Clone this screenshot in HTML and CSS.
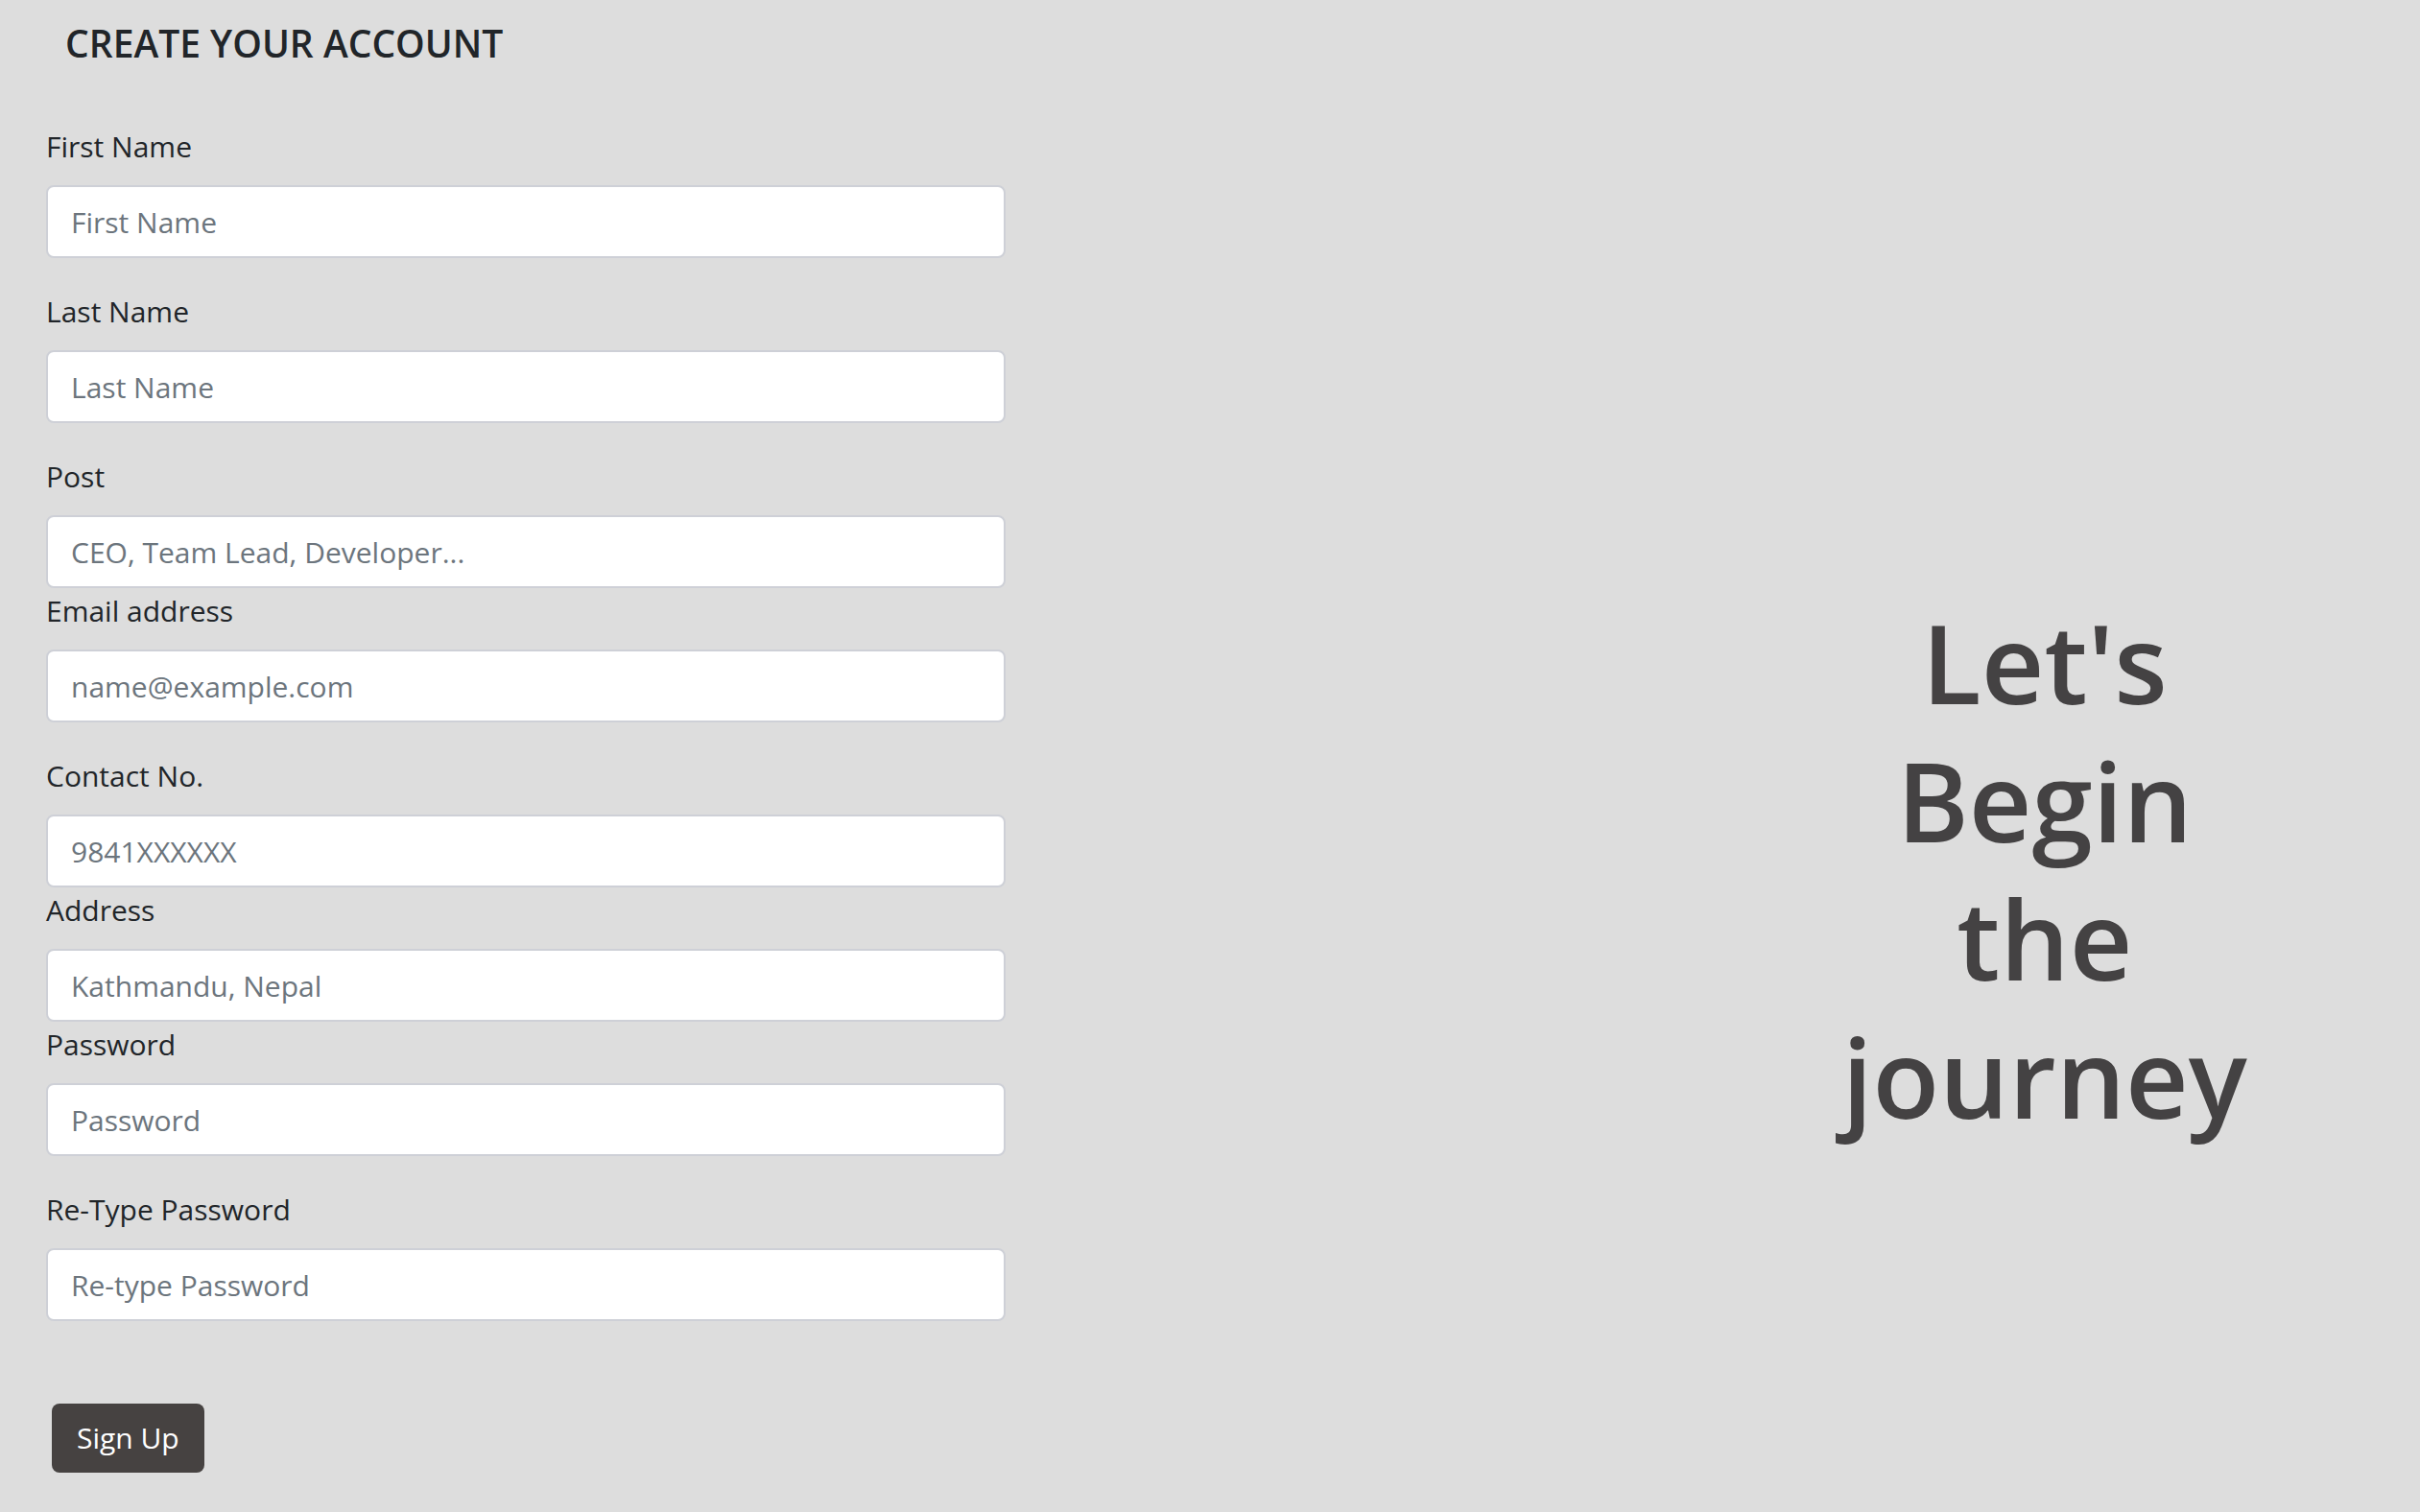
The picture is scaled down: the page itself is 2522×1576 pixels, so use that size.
FILE: index.html
```html
<!DOCTYPE html>
<html lang="en">
<head>
  <meta charset="utf-8">
  <meta name="viewport" content="width=device-width, initial-scale=1">
  <title>Create your account</title>
  <link rel="stylesheet" href="styles.css">
</head>
<body>
  <main class="page">
    <section class="signup">
      <h1 class="signup-title">CREATE YOUR ACCOUNT</h1>
      <form class="signup-form">
        <div class="field spaced">
          <label for="first-name">First Name</label>
          <input id="first-name" type="text" placeholder="First Name">
        </div>
        <div class="field spaced">
          <label for="last-name">Last Name</label>
          <input id="last-name" type="text" placeholder="Last Name">
        </div>
        <div class="field">
          <label for="post">Post</label>
          <input id="post" type="text" placeholder="CEO, Team Lead, Developer...">
        </div>
        <div class="field spaced">
          <label for="email">Email address</label>
          <input id="email" type="email" placeholder="name@example.com">
        </div>
        <div class="field">
          <label for="contact">Contact No.</label>
          <input id="contact" type="tel" placeholder="9841XXXXXX">
        </div>
        <div class="field">
          <label for="address">Address</label>
          <input id="address" type="text" placeholder="Kathmandu, Nepal">
        </div>
        <div class="field spaced">
          <label for="password">Password</label>
          <input id="password" type="password" placeholder="Password">
        </div>
        <div class="field">
          <label for="password-again">Re-Type Password</label>
          <input id="password-again" type="password" placeholder="Re-type Password">
        </div>
        <button class="submit" type="submit">Sign Up</button>
      </form>
    </section>
    <aside class="welcome">
      <h2 class="welcome-text">Let's Begin the journey</h2>
    </aside>
  </main>
</body>
</html>
```
FILE: styles.css
```css
* {
  box-sizing: border-box;
}

body {
  margin: 0;
  background: #dddddd;
  color: #212529;
  font-family: "Segoe UI", "Open Sans", "Noto Sans", sans-serif;
  font-size: 30px;
  line-height: 48px;
}

.page {
  display: grid;
  grid-template-columns: 5fr 4fr 3fr;
  min-height: 100vh;
}

.signup {
  padding: 21px 3px 40px 48px;
}

.signup-title {
  margin: 0 0 60px;
  padding-left: 20px;
  font-size: 39px;
  font-weight: 600;
  line-height: 48px;
}

.field {
  display: flex;
  flex-direction: column;
  gap: 16px;
}

.field.spaced {
  margin-bottom: 32px;
}

.field input {
  width: 100%;
  height: 76px;
  padding: 12px 24px;
  border: 2px solid #ced0d7;
  border-radius: 8px;
  background: #ffffff;
  color: #212529;
  font: inherit;
}

.field input::placeholder {
  color: #6c757d;
  opacity: 1;
}

.submit {
  margin: 86px 0 0 6px;
  padding: 12px 26px;
  border: 0;
  border-radius: 8px;
  background: #464241;
  color: #ffffff;
  font: inherit;
}

.welcome {
  grid-column: 3;
  display: flex;
  align-items: center;
  align-self: center;
  padding: 236px 152px 0 0;
}

.welcome-text {
  flex: 1;
  margin: 0;
  color: #444243;
  font-size: 114px;
  font-weight: 600;
  line-height: 144px;
  text-align: center;
}
```
